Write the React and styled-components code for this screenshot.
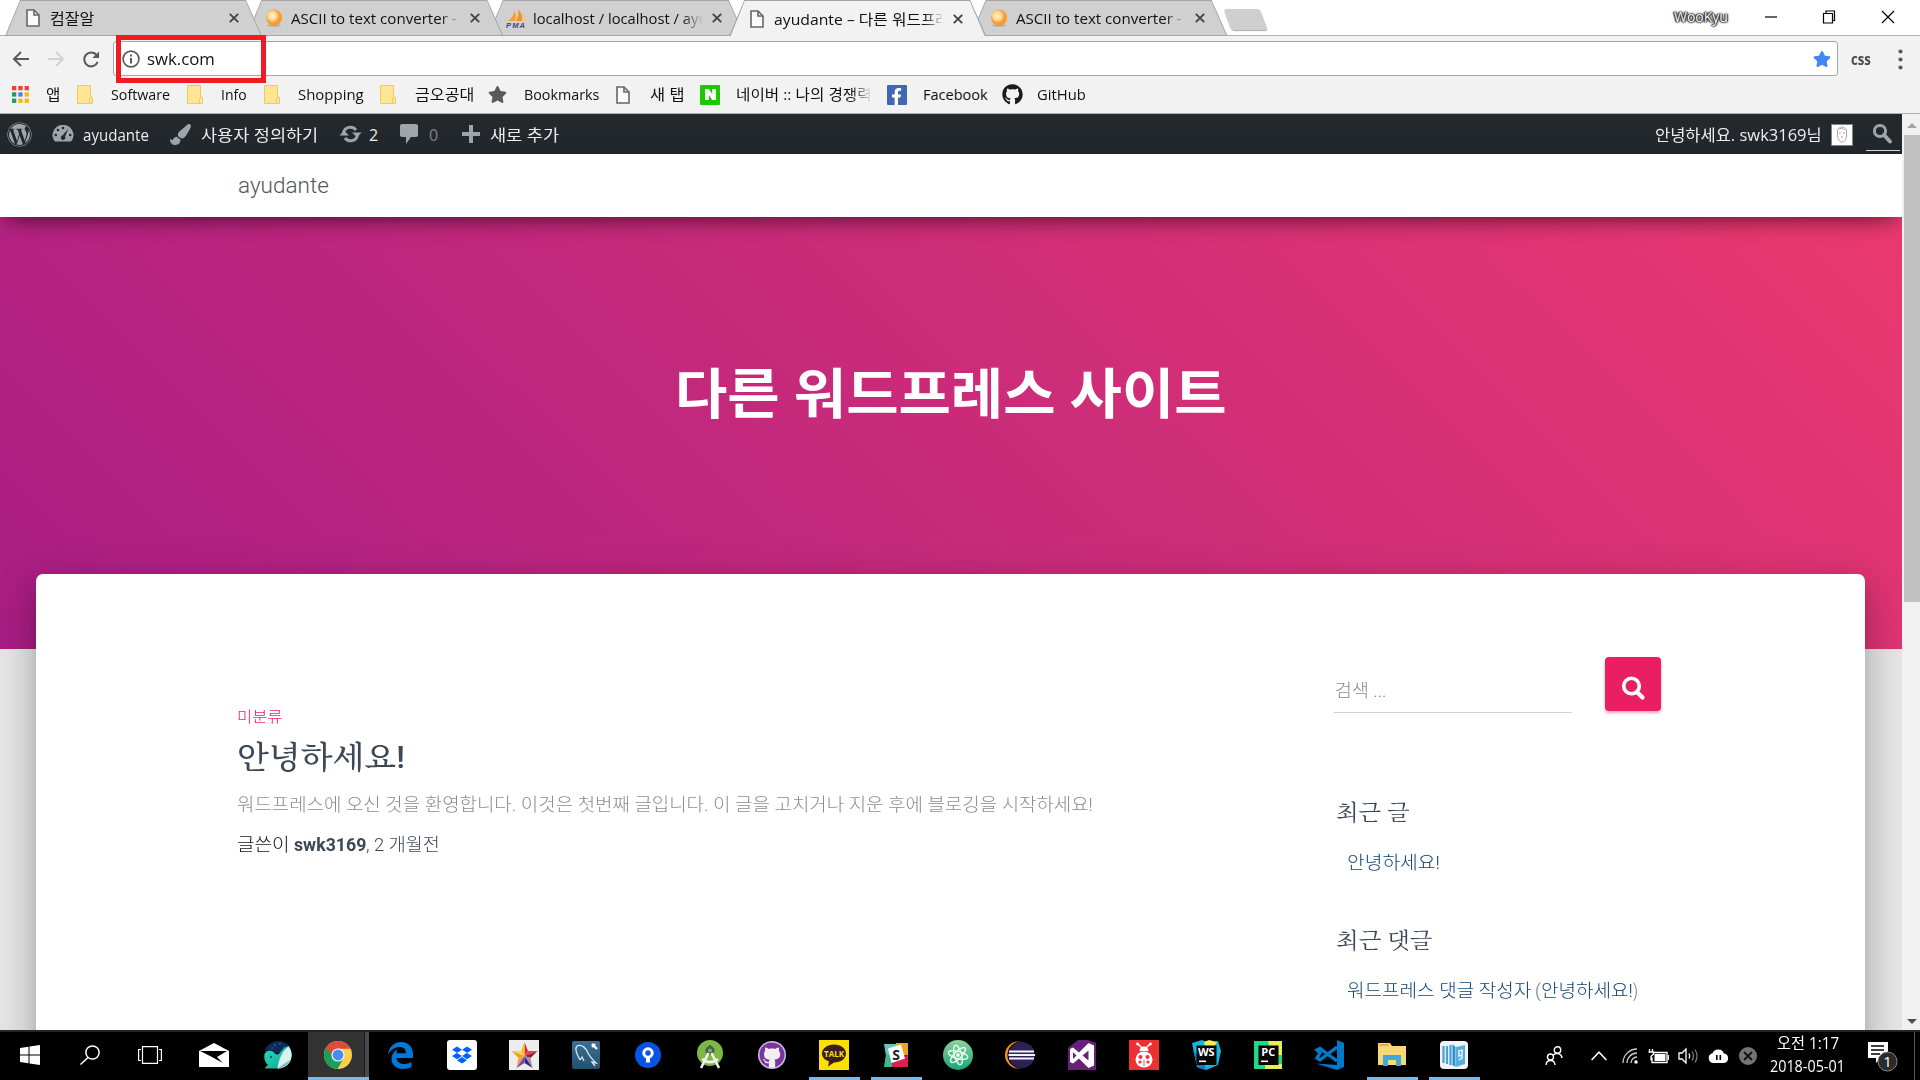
import React, { useLayoutEffect, useRef, useState } from "react";
import styled, { createGlobalStyle } from "styled-components";
import {
  FaWordpress,
  FaGithub,
  FaDropbox,
  FaFacebookF,
  FaStar,
  FaPaintBrush,
} from "react-icons/fa";

const UI = `"Open Sans", "Noto Sans CJK KR", sans-serif`;
const WEB = `Roboto, "Noto Sans CJK KR", sans-serif`;

const Global = createGlobalStyle`
  * { box-sizing: border-box; }
  html, body { margin: 0; padding: 0; overflow: hidden; background: #fff; }
  svg { display: block; flex: none; overflow: visible; }
`;

/* ---------- text that fills a given column width ---------- */
const FitBox = styled.span`
  display: block;
  flex: none;
  width: ${(p) => p.$w}px;
  white-space: nowrap;
  font-family: ${(p) => (p.$serif ? `Roboto, "Noto Serif CJK KR", "Noto Sans CJK KR", serif` : p.$web ? WEB : UI)};
  font-size: ${(p) => p.$size}px;
  font-weight: ${(p) => p.$weight || 400};
  color: ${(p) => p.$color || "#111"};
  line-height: ${(p) => p.$lh || 24}px;
`;
const FitInner = styled.span`
  display: inline-block;
  white-space: pre;
  transform-origin: 0 50%;
`;
function Fit({ w, size = 15, weight, color, web, serif, lh, children }) {
  const ref = useRef(null);
  const [scale, setScale] = useState(1);
  useLayoutEffect(() => {
    setScale(w / ref.current.offsetWidth);
  }, [w]);
  return (
    <FitBox $w={w} $size={size} $weight={weight} $color={color} $web={web} $serif={serif} $lh={lh}>
      <FitInner ref={ref} style={{ transform: `scaleX(${scale})` }}>
        {children}
      </FitInner>
    </FitBox>
  );
}

const Gap = styled.div`
  flex: none;
  width: ${(p) => p.$w}px;
`;

const Screen = styled.div`
  width: 1920px;
  height: 1080px;
  display: flex;
  flex-direction: column;
  overflow: hidden;
  position: relative;
  font-family: ${UI};
`;

/* ---------- tab strip ---------- */
const TabStrip = styled.div`
  height: 36px;
  flex: none;
  display: flex;
  background: linear-gradient(#b3b3b3, #b3b3b3) 0 100% / 100% 1px no-repeat #fff;
  padding-left: 5px;
`;
const Tab = styled.div`
  width: 257px;
  height: 36px;
  flex: none;
  margin-right: -15.6px;
  z-index: ${(p) => p.$z};
  background: #a5a5a5;
  clip-path: polygon(15px 0, 241px 0, 257px 100%, 0 100%);
  padding: 1px 0 ${(p) => (p.$active ? 0 : 1)}px;
`;
const TabBody = styled.div`
  height: 100%;
  display: flex;
  align-items: center;
  padding-left: 19px;
  background: ${(p) => (p.$active ? "#f2f2f2" : "#d0d0d0")};
  clip-path: polygon(15.5px 0, 240.5px 0, 255.5px 100%, 1.5px 100%);
`;
const TabIcon = styled.div`
  width: 18px;
  display: flex;
  justify-content: center;
  flex: none;
`;
const TabTitle = styled.div`
  width: 170px;
  margin-left: 8px;
  flex: none;
  overflow: hidden;
  mask-image: linear-gradient(90deg, #000 88%, transparent 100%);
`;
const NewTab = styled.div`
  width: 43px;
  height: 21px;
  margin: 9px 0 0 12px;
  background: #cfcfcf;
  transform: skewX(20deg) scaleX(0.84);
  border-radius: 3px;
  box-shadow: 0 1px 1px #aaa;
`;
const WindowBar = styled.div`
  margin-left: auto;
  height: 34px;
  display: flex;
  align-items: center;
  padding-right: 26px;
`;
const UserName = styled.div`
  text-shadow: 0 0 1px #222, 0 0 2px #222, 0 0 2px #222, 0 0 3px #444, 1px 0 1px #444, -1px 0 1px #444;
  margin: -1px 36px 0 0;
`;

const PageIcon = () => (
  <svg width="14" height="18" viewBox="0 0 14 18" fill="#fafafa" stroke="#666" strokeWidth="1.6">
    <path d="M1 1h7l5 5v11H1z" />
    <path d="M8 1v5h5" fill="none" />
  </svg>
);
const BallIcon = () => (
  <svg width="18" height="18" viewBox="0 0 18 18">
    <defs>
      <radialGradient id="ball" cx=".4" cy=".4" r=".65">
        <stop offset="0" stopColor="#fff7dc" />
        <stop offset=".45" stopColor="#ffd089" />
        <stop offset=".6" stopColor="#fca63a" />
        <stop offset="1" stopColor="#f29422" />
      </radialGradient>
    </defs>
    <ellipse cx="9" cy="16.4" rx="7" ry="1.3" fill="#b9ab98" />
    <circle cx="9" cy="8.500" r="8" fill="url(#ball)" />
  </svg>
);
const PmaIcon = () => (
  <svg width="20" height="19" viewBox="0 0 20 19">
    <path d="M8 1c2 3 2.500 7 1 11H2C6 9 8 6 8 1z" fill="#f5a031" />
    <path d="M12 0c3 3 5 7 4 12h-6c2-4 3-8 2-12z" fill="#f79421" />
    <path d="M17 5c2 2 3 5 2 7h-2c1-3 .6-5 0-7z" fill="#fbc27a" />
    <text x="0" y="18.500" fontSize="7.500" fontWeight="700" fontStyle="italic" fontFamily="Liberation Sans, sans-serif" fill="#3a4a7c" textLength="19">PMA</text>
  </svg>
);
const TabClose = () => (
  <svg width="10" height="10" viewBox="0 0 10 10" stroke="#444" strokeWidth="1.9">
    <path d="M.8.8l8.400 8.400M9.200.8L.8 9.200" />
  </svg>
);

const TABS = [
  { icon: <PageIcon />, title: "컴잘알", w: 44 },
  { icon: <BallIcon />, title: "ASCII to text converter -", w: 166 },
  { icon: <PmaIcon />, title: "localhost / localhost / ayud", w: 183 },
  { icon: <PageIcon />, title: "ayudante – 다른 워드프레스", w: 190, active: true },
  { icon: <BallIcon />, title: "ASCII to text converter -", w: 166 },
];

/* ---------- toolbar ---------- */
const Toolbar = styled.div`
  height: 42px;
  flex: none;
  display: flex;
  padding: 5px 0 0 12px;
  background: #f2f2f2;
`;
const NavButton = styled.div`
  width: 35px;
  height: 36px;
  display: flex;
  align-items: center;
  flex: none;
`;
const Address = styled.div`
  width: 1725px;
  height: 35px;
  margin-left: -4px;
  flex: none;
  border: 1px solid #a6a6a6;
  border-radius: 3px;
  background: #fff;
  display: flex;
  align-items: center;
  padding: 0 8px;
`;
const Bookmarks = styled.div`
  height: 36px;
  flex: none;
  display: flex;
  align-items: center;
  padding: 0 0 2px 12px;
  background: #f2f2f2;
  border-bottom: 1px solid #b2b2b2;
`;
const Bookmark = styled.div`
  width: ${(p) => p.$w}px;
  flex: none;
  display: flex;
  align-items: center;
`;
const BookmarkIcon = styled.div`
  width: ${(p) => p.$w}px;
  flex: none;
`;
const BookmarkText = styled.div`
  mask-image: ${(p) => (p.$fade ? "linear-gradient(90deg,#000 85%,transparent)" : "none")};
`;
const NaverMark = styled.div`
  width: 20px;
  height: 20px;
  border-radius: 1px;
  background: #1ec800;
  display: flex;
  align-items: center;
  justify-content: center;
`;
const FacebookMark = styled.div`
  width: 20px;
  height: 20px;
  border-radius: 1px;
  background: #4267b2;
  display: flex;
  align-items: flex-end;
  justify-content: flex-end;
  padding-right: 2px;
`;
const Highlight = styled.div`
  position: absolute;
  left: 116px;
  top: 35px;
  width: 150px;
  height: 48px;
  border: 5px solid #ed1c24;
  z-index: 20;
`;

const Folder = () => (
  <svg width="17" height="19" viewBox="0 0 17 19" fill="#ffe694" stroke="#eccb62">
    <path d="M.5.5h13v11l2 1v6H.5z" />
    <path d="M12.500 18v-4l1.500-2" fill="none" />
  </svg>
);
const APP_COLORS = ["#ea4335", "#ea4335", "#ea4335", "#1e9e57", "#4285f4", "#fbb60c", "#1e9e57", "#fbb60c", "#fbb60c"];
const Apps = () => (
  <svg width="17" height="17" viewBox="0 0 17 17">
    {APP_COLORS.map((c, i) => (
      <rect key={i} x={(i % 3) * 6.3} y={Math.floor(i / 3) * 6.3} width="4.300" height="4.300" fill={c} />
    ))}
  </svg>
);

const MARKS = [
  { w: 65, icon: <Apps />, iw: 34, t: "앱", tw: 14 },
  { w: 110, icon: <Folder />, iw: 34, t: "Software", tw: 59 },
  { w: 77, icon: <Folder />, iw: 34, t: "Info", tw: 26 },
  { w: 116, icon: <Folder />, iw: 34, t: "Shopping", tw: 66 },
  { w: 108, icon: <Folder />, iw: 35, t: "금오공대", tw: 59 },
  { w: 128, icon: <FaStar size="19" color="#5a5a5a" />, iw: 36, t: "Bookmarks", tw: 75 },
  { w: 84, icon: <PageIcon />, iw: 34, t: "새 탭", tw: 34 },
  {
    w: 187,
    icon: (
      <NaverMark>
        <svg width="11" height="11" viewBox="0 0 11 11" fill="#fff"><path d="M0 0h3.800l3.400 5V0H11v11H7.200L3.800 6v5H0z" /></svg>
      </NaverMark>
    ),
    iw: 36, t: "네이버 :: 나의 경쟁력", tw: 136, fade: true,
  },
  { w: 115, icon: <FacebookMark><FaFacebookF size="17" color="#fff" /></FacebookMark>, iw: 36, t: "Facebook", tw: 65 },
  { w: 100, icon: <FaGithub size="21" color="#1b1b1b" />, iw: 35, t: "GitHub", tw: 49 },
];

/* ---------- wordpress page ---------- */
const PageArea = styled.div`
  height: 916px;
  flex: none;
  display: flex;
`;
const Viewport = styled.div`
  width: 1902px;
  flex: none;
  overflow: hidden;
  background: #e5e5e5;
`;
const AdminBar = styled.div`
  height: 40px;
  background: #23282d;
  display: flex;
  align-items: center;
  padding-left: 7px;
`;
const AdminText = styled.div`
  padding-top: 2px;
`;
const AdminIcon = styled.div`
  flex: none;
  width: ${(p) => p.$w}px;
  color: #a0a5aa;
`;
const AdminRight = styled.div`
  margin-left: auto;
  display: flex;
  align-items: center;
  padding-right: 2px;
`;
const Avatar = styled.div`
  width: 22px;
  height: 22px;
  background: #fff;
  border: 1px solid #82878c;
  margin: 1px 13px 0 9px;
  display: flex;
  justify-content: center;
  align-items: center;
`;
const AdminSearch = styled.div`
  width: 34px;
  height: 37px;
  border-bottom: 1px solid #ddd;
  margin-top: -3px;
  padding: 9px 0 0 6px;
`;
const SiteHeader = styled.header`
  height: 63px;
  background: #fff;
  display: flex;
  align-items: center;
  padding: 0 0 2px 238px;
  position: relative;
  z-index: 2;
  box-shadow: 0 13px 25px -15px rgba(0, 0, 0, 0.42), 0 4px 25px 0 rgba(0, 0, 0, 0.12),
    0 10px 13px -6px rgba(0, 0, 0, 0.2);
`;
const Hero = styled.section`
  height: 432px;
  background: linear-gradient(45deg, #a81d84 0%, #ea396f 100%);
  display: flex;
  justify-content: center;
  padding-top: 139px;
`;
const Card = styled.main`
  width: 1829px;
  height: 700px;
  margin: -75px 0 0 36px;
  position: relative;
  background: #fff;
  border-radius: 7px;
  display: flex;
  padding-left: 201px;
  box-shadow: 0 20px 30px 2px rgba(0, 0, 0, 0.14), 0 8px 38px 6px rgba(0, 0, 0, 0.12),
    0 10px 13px -6px rgba(0, 0, 0, 0.2);
`;
const Post = styled.article`
  width: 1097px;
  flex: none;
  padding-top: 131px;
`;
const Line = styled.div`
  height: ${(p) => p.$h}px;
  display: flex;
  align-items: center;
  padding-left: ${(p) => p.$pl || 0}px;
`;
const Sidebar = styled.aside`
  width: 340px;
  padding-top: 83px;
`;
const SearchRow = styled.div`
  display: flex;
  height: 56px;
  margin-bottom: 80px;
`;
const SearchInput = styled.div`
  width: 238px;
  height: 56px;
  border-bottom: 1px solid #d2d2d2;
  padding: 22px 0 0 1px;
  margin-right: 33px;
`;
const SearchButton = styled.div`
  width: 56px;
  height: 54px;
  border-radius: 4px;
  background: #e91e63;
  box-shadow: 0 2px 3px rgba(233, 30, 99, 0.4);
  display: flex;
  align-items: center;
  justify-content: center;
  padding: 8px 1px 0 0;
`;
const Block = styled.div`
  height: ${(p) => p.$h}px;
`;
const Scrollbar = styled.div`
  width: 18px;
  height: 916px;
  background: #f1f1f1;
  display: flex;
  flex-direction: column;
  align-items: center;
  padding: 9px 0 6px 2px;
`;
const Thumb = styled.div`
  width: 16px;
  height: 467px;
  margin-top: 7px;
  margin-bottom: auto;
  background: #c1c1c1;
`;

/* ---------- taskbar ---------- */
const Taskbar = styled.footer`
  height: 50px;
  flex: none;
  background: #000;
  border-top: 2px solid #222426;
  display: flex;
`;
const Slot = styled.div`
  width: ${(p) => p.$w}px;
  height: 48px;
  flex: none;
  display: flex;
  align-items: center;
  justify-content: center;
  border-bottom: 3px solid transparent;
  padding-top: 1px;
`;
const Cell = styled(Slot)`
  width: 51px;
  margin: 0 5.5px;
  border-bottom-color: ${(p) => (p.$open ? "#76b9ed" : "transparent")};
`;
const ActiveCell = styled(Slot)`
  width: 61px;
  padding-right: 2px;
  background: linear-gradient(90deg, #333 56px, #1a1a1a 56px, #1a1a1a 57px, #4a4a4a 57px);
  border-bottom-color: #76b9ed;
`;
const Tile = styled.div`
  width: ${(p) => p.$s || 30}px;
  height: ${(p) => p.$s || 30}px;
  border-radius: ${(p) => p.$r || 0}px;
  background: ${(p) => p.$bg};
  display: flex;
  align-items: center;
  justify-content: center;
`;
const Tray = styled.div`
  width: 402px;
  margin-left: auto;
  display: flex;
  align-items: center;
  padding-left: 27px;
`;
const Clock = styled.div`
  width: 75px;
  display: flex;
  flex-direction: column;
  align-items: center;
  margin: -2px 21px 0 0;
`;
const ShowDesktop = styled.div`
  width: 5px;
  height: 48px;
  margin-left: 16px;
  border-left: 1px solid #555;
`;

const label = { fontFamily: "Open Sans, sans-serif", fontWeight: 700, textAnchor: "middle" };

const Edge = () => (
  <svg width="25" height="27" viewBox="0 0 25 27" fill="#0078d7">
    <path d="M0 12.500C1 5 6 0 13 0c8 0 12 6 12 12.500V16H8.500c.3 4 4 6 8 6 2.500 0 5-.8 7-2v5c-2.500 1.300-5.500 2-8.500 2C8 27 3.500 22.500 3.500 17c0-4.500 2.500-8 6-9.800C8.800 8.500 8.500 10 8.500 11.200h9.300c0-4-2-6.200-6-6.200C7 5 2.500 8 0 12.500z" />
  </svg>
);
const Whale = () => (
  <svg width="30" height="30" viewBox="0 0 30 30">
    <defs><linearGradient id="wh" x1="0" y1="0" x2="1" y2="1"><stop offset="0" stopColor="#27e0b4" /><stop offset="1" stopColor="#159c93" /></linearGradient></defs>
    <path d="M2 12C3 5 9 1 16 1s12 5 13 13z" fill="#0b2a5e" />
    <path d="M1.500 14c2-4 7-4.500 10-1 2 2 4 2 6-1 2-3 4-5 8-6 4 5 4 11 1 16-3 4-7 6.500-12 6.500H2c.5-1.500 1.500-2.500 3-3.500-3.500-3-4-7-3.500-11z" fill="url(#wh)" />
    <path d="M14.500 28.500c1-9 5-18 11-22 4 5 4 11 1 16-3 4-7 6-12 6z" fill="#d9f3f0" />
    <path d="M15 28l12-8c-2 5-7 8-12 8.300z" fill="#7eb6b5" />
    <g fill="#5d79a8"><circle cx="12" cy="5" r=".8" /><circle cx="17" cy="4" r=".8" /><circle cx="9" cy="8" r=".7" /><circle cx="21" cy="7" r=".7" /></g>
    <circle cx="8" cy="17" r="1" fill="#0b3a55" />
  </svg>
);
const Chrome = () => (
  <svg width="28" height="28" viewBox="0 0 28 28">
    <circle cx="14" cy="14" r="14" fill="#ffd04c" />
    <path d="M14 14L1.900 7A14 14 0 0 0 13.500 28l6-10.500z" fill="#1a9e5b" />
    <path d="M14 14H8L1.900 7A14 14 0 0 1 26.500 7.700H14z" fill="#dd4b3e" />
    <circle cx="14" cy="14" r="6.600" fill="#f5f5f5" />
    <circle cx="14" cy="14" r="5.400" fill="#4a8af4" />
  </svg>
);
const StarApp = () => (
  <svg width="27" height="26" viewBox="0 0 26 26">
    <path d="M13 0l3.500 9L13 14z" fill="#e0224b" /><path d="M13 0L9.500 9l3.500 5z" fill="#f6c21b" />
    <path d="M26 9h-9.500L13 14z" fill="#ee3c5c" /><path d="M26 9l-7 7-6-2z" fill="#9f1b3a" />
    <path d="M0 9h9.500L13 14z" fill="#fbd34d" /><path d="M0 9l7 7 6-2z" fill="#eaa50d" />
    <path d="M21 26l-2-10-6-2z" fill="#999" /><path d="M21 26l-8-5v-7z" fill="#3b1d85" />
    <path d="M5 26l2-10 6-2z" fill="#f3a02c" /><path d="M5 26l8-5v-7z" fill="#6f44c0" />
  </svg>
);
const MySql = () => (
  <svg width="28" height="28" viewBox="0 0 28 28" fill="none" stroke="#d9e8f2" strokeWidth="1.300">
    <path d="M8 19C4 12 3 7 5 5c5-2 9 2 11 7 2 4 4 6 8 10l-4-1 3 4M8 19l2-3 2 4" />
    <path d="M20 3l5 5M20 6l3-3" stroke="#fff" strokeWidth="2.200" />
  </svg>
);
const SourceTree = () => (
  <svg width="26" height="26" viewBox="0 0 26 26">
    <circle cx="13" cy="13" r="13" fill="#0656e6" />
    <circle cx="13" cy="11" r="4.200" fill="none" stroke="#fff" strokeWidth="3" />
    <path d="M11 14h4v6.500h-4z" fill="#fff" />
  </svg>
);
const AndroidStudio = () => (
  <svg width="28" height="30" viewBox="0 0 28 30">
    <circle cx="14" cy="13" r="13" fill="#7cb944" />
    <path d="M13 5h2v2h-2z" fill="#455" /><circle cx="14" cy="10.500" r="3.300" fill="none" stroke="#4e5a58" strokeWidth="2.500" />
    <path d="M12.500 13L5 28M15.500 13L23 28M6 19c5 4 11 4 16 0" fill="none" stroke="#f1f1f1" strokeWidth="2.600" />
  </svg>
);
const Talk = () => (
  <svg width="30" height="30" viewBox="0 0 30 30">
    <path d="M15 4.500c7 0 12 4 12 9s-5 9-12 9l-6 4 1-5C5.500 20 3 17 3 13.500c0-5 5-9 12-9z" fill="#3b1d1d" />
    <text x="15" y="16.800" fontSize="8" fill="#fae100" {...label}>TALK</text>
  </svg>
);
const Slack = () => (
  <svg width="26" height="26" viewBox="0 0 26 26">
    <path d="M1 2h12v10l-10 2z" fill="#66c7c0" /><path d="M13 1h12v12l-7 1-5-7z" fill="#e9a820" />
    <path d="M1 25l2-13 7 2v11z" fill="#3eb890" /><path d="M9 20l16-7v12H9z" fill="#df1f50" />
    <path d="M5 6.500l13-4 4 14L8.500 21z" fill="#fff" />
    <text x="13.200" y="17.500" fontSize="14" fill="#222" {...label}>S</text>
  </svg>
);
const Atom = () => (
  <svg width="30" height="30" viewBox="0 0 30 30" fill="none" stroke="#e8fff2" strokeWidth="1.400">
    <defs><linearGradient id="at" x1="0" y1="0" x2="0" y2="1"><stop offset="0" stopColor="#8fd19a" /><stop offset="1" stopColor="#18a679" /></linearGradient></defs>
    <circle cx="15" cy="15" r="15" fill="url(#at)" stroke="none" />
    <ellipse cx="15" cy="15" rx="10" ry="3.600" transform="rotate(15 15 15)" />
    <ellipse cx="15" cy="15" rx="10" ry="3.600" transform="rotate(75 15 15)" />
    <ellipse cx="15" cy="15" rx="10" ry="3.600" transform="rotate(135 15 15)" />
    <circle cx="15" cy="15" r="1.200" fill="#fff" />
  </svg>
);
const Eclipse = () => (
  <svg width="30" height="28" viewBox="0 0 30 28">
    <circle cx="13.500" cy="14" r="13.500" fill="#f7941e" /><circle cx="16" cy="14" r="13.600" fill="#000" />
    <circle cx="16.700" cy="14" r="13" fill="#2c2255" />
    <path d="M4 10.500h25M3.500 14h26.500M4 17.500h25" stroke="#f4f4fb" strokeWidth="2" />
  </svg>
);
const VisualStudio = () => (
  <svg width="28" height="30" viewBox="0 0 28 30">
    <path d="M0 8L10 0h10l8 3v27H0z" fill="#68217a" />
    <path d="M2 9l3-1.500 6 5L20.500 3 26 5.500v20L20.500 28 11 18.500l-6 5L2 22zM5 12v7l3.500-3.500zM20.500 10.500l-6 5 6 5z" fill="#fff" fillRule="evenodd" />
  </svg>
);
const Bug = () => (
  <svg width="22" height="28" viewBox="0 0 22 28" fill="#fff">
    <path d="M5 3l5 5M17 3l-5 5" stroke="#fff" strokeWidth="1.500" /><circle cx="4.500" cy="3" r="1.400" /><circle cx="17.500" cy="3" r="1.400" />
    <path d="M6.500 10a4.500 4.500 0 0 1 9 0z" /><ellipse cx="11" cy="18.500" rx="8.500" ry="8" />
    <g fill="#ef3033"><circle cx="7.500" cy="16" r="2" /><circle cx="14.500" cy="16" r="2" /><circle cx="7" cy="21" r="1.600" /><circle cx="15" cy="21" r="1.600" /><path d="M10.600 19h.8v6h-.8z" /></g>
  </svg>
);
const JetBrains = ({ text, a, b }) => (
  <svg width="30" height="30" viewBox="0 0 30 30">
    <path d={text === "WS" ? "M1 3l10-3 7 3 9-2 3 10-3 14-12 5-9-3z" : "M1 1h28v28H1z"} fill={a} />
    <path d={text === "WS" ? "M13 2l5-2 8 2-3 5-9-1z" : "M15 1h14v14H18zM12 24h17v5H12z"} fill={b} />
    {text === "WS" && <path d="M2 10l5 18 8 2-2-6z" fill="#087cc4" />}
    <path d="M5.500 5.500h20v19.500h-20z" fill="#050505" />
    <text x="15.300" y="16" fontSize="11" fill="#fff" {...label}>{text}</text>
    <path d="M8 20.500h7v1.600H8z" fill="#fff" />
  </svg>
);
const VsCode = () => (
  <svg width="30" height="30" viewBox="0 0 30 30">
    <path d="M22 0l7 3v24l-7 3L1 23.500l21 1.500z" fill="#0179cb" />
    <path d="M22 7L5 20l-3-2 3-5L2 10l3-1.500L22 21" fill="none" stroke="#0179cb" strokeWidth="3.400" />
  </svg>
);
const Explorer = () => (
  <svg width="28" height="24" viewBox="0 0 28 24">
    <path d="M0 0h12l2 3h14v19H0z" fill="#fcd874" /><path d="M1 1h10v2H1z" fill="#e8ae3c" />
    <path d="M5 12h18v11h-5v-6h-8v6H5z" fill="#3fa9dd" />
  </svg>
);
const Cube = () => (
  <svg width="26" height="26" viewBox="0 0 26 26">
    <path d="M2.500 4v17M6 4v18M9.500 3v20" stroke="#4aa0da" strokeWidth="2.200" />
    <path d="M11.500 2l3 3v20l-3-2z" fill="#2d8fd0" /><path d="M15 5l9-2v19l-9 3z" fill="#59aee0" />
    <path d="M18 9l3-1v5l-3 1zM18 18l3-2v-2" stroke="#fff" fill="none" strokeWidth="1.300" />
  </svg>
);

const DOCK = [
  { el: <Edge /> },
  { el: <Tile $bg="#fff" $r={3}><FaDropbox size="20" color="#0061ff" /></Tile> },
  { el: <Tile $bg="#ededed"><StarApp /></Tile> },
  { el: <Tile $bg="linear-gradient(#3c7195,#24506f)" $s={28} $r={2}><MySql /></Tile> },
  { el: <SourceTree /> },
  { el: <AndroidStudio /> },
  { el: <Tile $bg="radial-gradient(#f0f0f0 62%, #cdb5d8 66%)" $s={28} $r={14}><FaGithub size="26" color="#7b35a0" /></Tile> },
  { el: <Tile $bg="#fae100"><Talk /></Tile>, open: true },
  { el: <Slack />, open: true },
  { el: <Atom /> },
  { el: <Eclipse /> },
  { el: <VisualStudio /> },
  { el: <Tile $bg="#ef3033"><Bug /></Tile> },
  { el: <JetBrains text="WS" a="#12b8e0" b="#f3ee55" /> },
  { el: <JetBrains text="PC" a="#21d789" b="#e8ee55" /> },
  { el: <VsCode /> },
  { el: <Explorer />, open: true },
  { el: <Tile $bg="#f1f3f5" $s={28} $r={4}><Cube /></Tile>, open: true },
];

export default function App() {
  return (
    <Screen>
      <Global />
      <TabStrip>
        {TABS.map((t, i) => (
          <Tab key={i} $active={t.active} $z={t.active ? 10 : 9 - i}>
            <TabBody $active={t.active}>
              <TabIcon>{t.icon}</TabIcon>
              <TabTitle><Fit w={t.w} size={15}>{t.title}</Fit></TabTitle>
              <Gap $w={9} />
              <TabClose />
            </TabBody>
          </Tab>
        ))}
        <NewTab />
        <WindowBar>
          <UserName><Fit w={54} size={14} color="#fff">WooKyu</Fit></UserName>
          <svg width="130" height="14" viewBox="0 0 130 14" fill="none" stroke="#000" strokeWidth="1.200">
            <path d="M1 7h12" />
            <path d="M59.500 3.500h9v9.500h-9zM62 3.500V1h8.500v9.500H68.500" />
            <path d="M118 1l12 12M130 1l-12 12" />
          </svg>
        </WindowBar>
      </TabStrip>

      <Toolbar>
        <NavButton>
          <svg width="18" height="18" viewBox="0 0 18 18" fill="none" stroke="#5a5a5a" strokeWidth="2"><path d="M17 9H2M9 2L2 9l7 7" /></svg>
        </NavButton>
        <NavButton>
          <svg width="18" height="18" viewBox="0 0 18 18" fill="none" stroke="#d2d2d2" strokeWidth="2"><path d="M1 9h15M9 2l7 7-7 7" /></svg>
        </NavButton>
        <NavButton>
          <svg width="18" height="19" viewBox="0 0 19 19" fill="none" stroke="#5a5a5a" strokeWidth="2.200"><path d="M15.500 5A7.300 7.300 0 1 0 16.500 12" /><path d="M18 1v7h-7z" fill="#5a5a5a" stroke="none" /></svg>
        </NavButton>
        <Address>
          <svg width="18" height="18" viewBox="0 0 18 18" fill="none" stroke="#5a5a5a" strokeWidth="1.700"><circle cx="9" cy="9" r="7.900" /><path d="M9 8v5.500M9 4.500v2" strokeWidth="2" /></svg>
          <Gap $w={7} />
          <Fit w={68} size={16.5}>swk.com</Fit>
          <Gap $w={1598} />
          <FaStar size="18" color="#4285f4" />
        </Address>
        <Gap $w={13} />
        <NavButton><Fit w={20} size={16.5} weight={700} color="#4c4c4c">css</Fit></NavButton>
        <Gap $w={12} />
        <NavButton>
          <svg width="5" height="21" viewBox="0 0 5 21" fill="#5a5a5a"><circle cx="2.500" cy="2.500" r="2.100" /><circle cx="2.500" cy="10.500" r="2.100" /><circle cx="2.500" cy="18.500" r="2.100" /></svg>
        </NavButton>
      </Toolbar>

      <Bookmarks>
        {MARKS.map((m) => (
          <Bookmark key={m.t} $w={m.w}>
            <BookmarkIcon $w={m.iw}>{m.icon}</BookmarkIcon>
            <BookmarkText $fade={m.fade}><Fit w={m.tw} size={14.5}>{m.t}</Fit></BookmarkText>
          </Bookmark>
        ))}
      </Bookmarks>

      <PageArea>
        <Viewport>
          <AdminBar>
            <AdminIcon $w={45}><FaWordpress size="25" /></AdminIcon>
            <AdminIcon $w={31}>
              <svg width="22" height="19" viewBox="0 0 22 19"><path d="M11 0a10 10 0 0 0-8 16.500h16A10 10 0 0 0 11 0z" fill="#a0a5aa" /><g fill="#23282d"><circle cx="11" cy="3" r="1.300" /><circle cx="6" cy="5" r="1.300" /><circle cx="3.800" cy="10" r="1.300" /><circle cx="18.200" cy="10" r="1.300" /><path d="M16.500 3.500L13 11.500a2.200 2.200 0 1 1-2.500-1z" /></g></svg>
            </AdminIcon>
            <AdminText><Fit w={66} size={16} weight={500} color="#eee">ayudante</Fit></AdminText>
            <Gap $w={21} />
            <AdminIcon $w={31}><FaPaintBrush size="21" /></AdminIcon>
            <AdminText><Fit w={117} size={16} color="#eee">사용자 정의하기</Fit></AdminText>
            <Gap $w={21} />
            <AdminIcon $w={30}>
              <svg width="23" height="20" viewBox="0 0 23 20" fill="none" stroke="#a0a5aa" strokeWidth="3"><path d="M4.500 9a7 7 0 0 1 12.500-3M18.500 11a7 7 0 0 1-12.500 3" /><path d="M13 8.500h9.500L18 13.500zM10 11.500H.5L5 6.500z" fill="#a0a5aa" stroke="none" /></svg>
            </AdminIcon>
            <AdminText><Fit w={9} size={16} weight={500} color="#eee">2</Fit></AdminText>
            <Gap $w={22} />
            <AdminIcon $w={29}>
              <svg width="18" height="21" viewBox="0 0 18 21" fill="#a0a5aa"><path d="M2 0h14q2 0 2 2v9q0 2-2 2h-5l-5 7v-7H2q-2 0-2-2V2q0-2 2-2z" /></svg>
            </AdminIcon>
            <AdminText><Fit w={9} size={16} color="#7d8287">0</Fit></AdminText>
            <Gap $w={24} />
            <AdminIcon $w={28}>
              <svg width="18" height="18" viewBox="0 0 18 18" stroke="#a0a5aa" strokeWidth="4"><path d="M9 0v18M0 9h18" /></svg>
            </AdminIcon>
            <AdminText><Fit w={69} size={16} color="#eee">새로 추가</Fit></AdminText>
            <AdminRight>
              <AdminText><Fit w={167} size={16} color="#eee">안녕하세요. swk3169님</Fit></AdminText>
              <Avatar>
                <svg width="12" height="18" viewBox="0 0 12 18" fill="none" stroke="#aaa" strokeWidth="1"><path d="M1.500 4C3 0 9 0 10.500 4v7c-1 3-2 5-4.500 5s-4-3-4.500-6zM3 7h2M7 7h2M5 11h2M3 3l3-1 3 2" /></svg>
              </Avatar>
              <AdminSearch>
                <svg width="21" height="21" viewBox="0 0 21 21" fill="none" stroke="#a0a5aa"><circle cx="8" cy="8" r="5.600" strokeWidth="3" /><path d="M12 12l6 6.500" strokeWidth="4" strokeLinecap="round" /></svg>
              </AdminSearch>
            </AdminRight>
          </AdminBar>
          <SiteHeader><Fit web w={91} size={22.5} weight={300} color="#555" lh={30}>ayudante</Fit></SiteHeader>
          <Hero><Fit web w={552} size={54} weight={700} color="#fff" lh={80}>다른 워드프레스 사이트</Fit></Hero>
          <Card>
            <Post>
              <Line $h={24}><Fit web w={45} size={15} weight={300} color="#e91e63">미분류</Fit></Line>
              <Line $h={58}><Fit serif w={168} size={31} weight={500} color="#3c4858" lh={50}>안녕하세요!</Fit></Line>
              <Line $h={36}>
                <Fit web w={856} size={18} weight={300} color="#8c8c8c">워드프레스에 오신 것을 환영합니다. 이것은 첫번째 글입니다. 이 글을 고치거나 지운 후에 블로깅을 시작하세요!</Fit>
              </Line>
              <Line $h={44}>
                <Fit web w={53} size={18} weight={300} color="#111">글쓴이</Fit>
                <Gap $w={4} />
                <Fit web w={72} size={17.5} weight={700} color="#3c4858">swk3169</Fit>
                <Fit web w={74} size={18} weight={300} color="#3c4858">, 2 개월전</Fit>
              </Line>
            </Post>
            <Sidebar>
              <SearchRow>
                <SearchInput><Fit web w={51} size={18} weight={300} color="#888">검색 ...</Fit></SearchInput>
                <SearchButton>
                  <svg width="24" height="24" viewBox="0 0 24 24" fill="none" stroke="#fff" strokeLinecap="round"><circle cx="10.500" cy="10" r="7.800" strokeWidth="3.600" /><path d="M16.500 16.500l5 5" strokeWidth="4.200" /></svg>
                </SearchButton>
              </SearchRow>
              <Block $h={128}>
                <Line $h={40} $pl={2}><Fit serif w={74} size={21.5} color="#3c4858" lh={30}>최근 글</Fit></Line>
                <Line $h={60} $pl={13}><Fit web w={93} size={18} weight={300} color="#0f4373">안녕하세요!</Fit></Line>
              </Block>
              <Block $h={128}>
                <Line $h={40} $pl={2}><Fit serif w={96} size={21.5} color="#3c4858" lh={30}>최근 댓글</Fit></Line>
                <Line $h={60} $pl={13}>
                  <Fit web w={184} size={18} weight={300} color="#0f4373">워드프레스 댓글 작성자</Fit>
                  <Gap $w={4} />
                  <Fit web w={6} size={18} weight={300} color="#777">(</Fit>
                  <Fit web w={92} size={18} weight={300} color="#0f4373">안녕하세요!</Fit>
                  <Fit web w={5} size={18} weight={300} color="#777">)</Fit>
                </Line>
              </Block>
            </Sidebar>
          </Card>
        </Viewport>
        <Scrollbar>
          <svg width="10" height="5" viewBox="0 0 10 5" fill="#a3a3a3"><path d="M0 5l5-5 5 5z" /></svg>
          <Thumb />
          <svg width="10" height="5" viewBox="0 0 10 5" fill="#505050"><path d="M0 0l5 5 5-5z" /></svg>
        </Scrollbar>
      </PageArea>

      <Taskbar>
        <Slot $w={60}>
          <svg width="20" height="20" viewBox="0 0 20 20" fill="#fff"><path d="M0 3l8.500-1.200v7.700H0zM9.500 1.600L20 0v9.500H9.500zM0 10.500h8.500v7.700L0 17zM9.500 10.500H20V20L9.500 18.400z" /></svg>
        </Slot>
        <Slot $w={60}>
          <svg width="20" height="20" viewBox="0 0 20 20" fill="none" stroke="#fff" strokeWidth="1.500"><circle cx="12.500" cy="7.500" r="6.600" /><path d="M8 12.500L.5 19.500" /></svg>
        </Slot>
        <Slot $w={60}>
          <svg width="24" height="18" viewBox="0 0 24 18" fill="none" stroke="#fff" strokeWidth="1.200"><path d="M4.500.6h15v16.800h-15zM3 3.500H.6v11H3M21 3.500h2.400v11H21" /></svg>
        </Slot>
        <Slot $w={67}>
          <svg width="30" height="24" viewBox="0 0 30 24" fill="#fff"><path d="M0 8L15 0l15 8v16H0z" /><path d="M1 8h27L18 14l6 6-13-7z" fill="#000" /></svg>
        </Slot>
        <Slot $w={61}><Whale /></Slot>
        <ActiveCell><Chrome /></ActiveCell>
        {DOCK.map((d, i) => (
          <Cell key={i} $open={d.open}>{d.el}</Cell>
        ))}
        <Tray>
          <svg width="18" height="20" viewBox="0 0 18 20" fill="none" stroke="#fff" strokeWidth="1.400"><circle cx="12.500" cy="4" r="3.200" /><path d="M8.500 9c2-2.500 8-2 8.500 3" /><circle cx="5.500" cy="11" r="3" /><path d="M1 19c.5-6 8.500-6 9 0" /></svg>
          <Gap $w={28} />
          <svg width="16" height="10" viewBox="0 0 16 10" fill="none" stroke="#fff" strokeWidth="1.500"><path d="M.6 9L8 1.200 15.400 9" /></svg>
          <Gap $w={15} />
          <svg width="16" height="16" viewBox="0 0 16 16" fill="none" stroke="#ccc" strokeWidth="1.300"><path d="M1 15A14 14 0 0 1 15 1M5 15A10 10 0 0 1 15 5M9 15a6 6 0 0 1 6-6" /><circle cx="14" cy="14" r="1.700" fill="#fff" stroke="none" /></svg>
          <Gap $w={10} />
          <svg width="21" height="15" viewBox="0 0 21 15" fill="none" stroke="#fff" strokeWidth="1.300"><path d="M5.500 3.500h13.500v10H4v-5M1.500 0v3M4.500 0v3M.5 3h5v2L3 7.500v4" /><path d="M6.500 5h11v7h-11z" fill="#fff" stroke="none" /><path d="M20.300 6v5" /></svg>
          <Gap $w={9} />
          <svg width="21" height="16" viewBox="0 0 21 16" fill="none" stroke="#fff" strokeWidth="1.300"><path d="M1 5h3l4-4v14l-4-4H1zM11 5.500q1.500 2.500 0 5" /><path d="M14 3.500q3 4.500 0 9M17 1.500q4 6.500 0 13" stroke="#777" /></svg>
          <Gap $w={9} />
          <svg width="21" height="14" viewBox="0 0 21 14" fill="#fff"><path d="M5 14a5 5 0 0 1-.5-9.800A6.200 6.200 0 0 1 16 4.500 4.800 4.800 0 0 1 16 14z" /><path d="M8 6h1.600v5H8zM11.500 6h1.600v5h-1.600z" fill="#000" /></svg>
          <Gap $w={10} />
          <svg width="18" height="18" viewBox="0 0 18 18"><circle cx="9" cy="9" r="9" fill="#747474" /><path d="M5 5l8 8M13 5l-8 8" stroke="#111" strokeWidth="1.800" /></svg>
          <Gap $w={13} />
          <Clock>
            <Fit w={62} size={15.5} color="#fff" lh={23}>오전 1:17</Fit>
            <Fit w={75} size={15.5} color="#fff" lh={23}>2018-05-01</Fit>
          </Clock>
          <svg width="32" height="32" viewBox="0 0 32 32"><path d="M2 2h20v16h-7l-5 5v-5H2z" fill="#fff" /><path d="M5 6h13M5 10h13M5 14h9" stroke="#000" strokeWidth="1.400" /><circle cx="21.500" cy="21.500" r="9.500" fill="#2b2b2b" stroke="#888" /><text x="21.500" y="27" fontSize="15" fill="#fff" textAnchor="middle" fontFamily="Open Sans, sans-serif">1</text></svg>
          <ShowDesktop />
        </Tray>
      </Taskbar>
      <Highlight />
    </Screen>
  );
}
